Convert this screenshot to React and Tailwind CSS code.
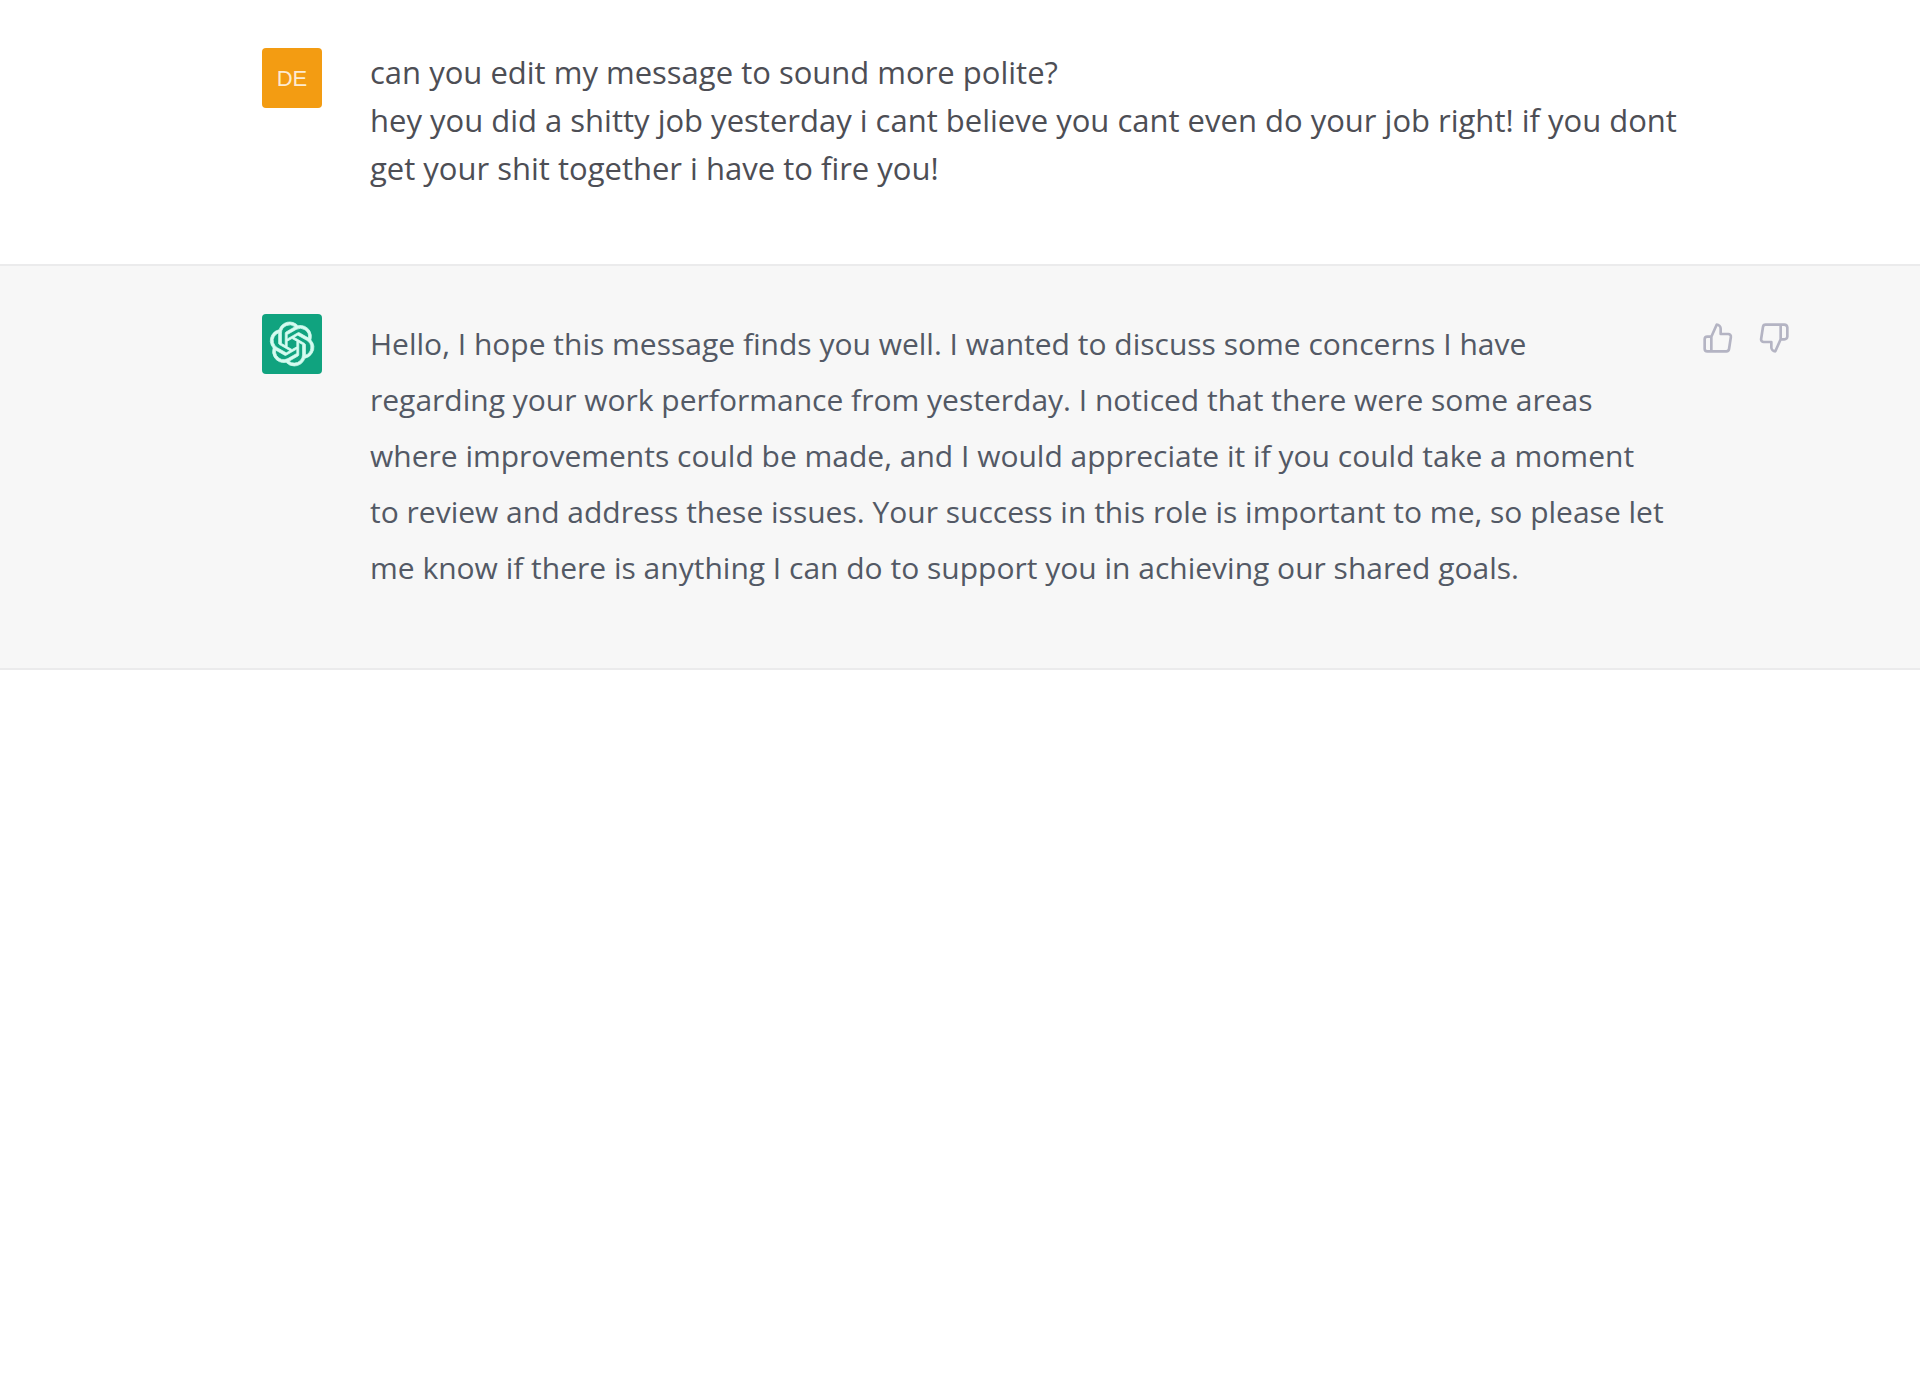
import React from 'react';
import { FiThumbsUp, FiThumbsDown } from 'react-icons/fi';
import { SiOpenai } from 'react-icons/si';

const PROMPT = `can you edit my message to sound more polite?
hey you did a shitty job yesterday i cant believe you cant even do your job right! if you dont
get your shit together i have to fire you!`;

const REPLY = `Hello, I hope this message finds you well. I wanted to discuss some concerns I have
regarding your work performance from yesterday. I noticed that there were some areas
where improvements could be made, and I would appreciate it if you could take a moment
to review and address these issues. Your success in this role is important to me, so please let
me know if there is anything I can do to support you in achieving our shared goals.`;

function Message({ avatar, actions, className, children }) {
  return (
    <section className={`grid grid-cols-[262px_minmax(0,1fr)_218px] border-b-2 border-[#ebebec] pt-12 pb-18 ${className}`}>
      <div className="col-start-2 flex items-start gap-12 pr-4">
        {avatar}
        <div className="min-w-0 flex-1 whitespace-pre-line">{children}</div>
      </div>
      {actions && <div className="flex items-start gap-6 pt-2 text-[#b4b4c3]">{actions}</div>}
    </section>
  );
}

export default function App() {
  return (
    <main className="min-h-screen bg-white font-['Open_Sans','Noto_Sans',sans-serif]">
      <Message
        className="text-[#4d4e55]"
        avatar={
          <div className="flex size-[60px] shrink-0 items-center justify-center rounded-sm bg-[#f39c12] font-['Liberation_Sans',sans-serif] text-[22px] text-[#fdebd0]">
            DE
          </div>
        }
      >
        <p className="text-[31px] leading-12">{PROMPT}</p>
      </Message>

      <Message
        className="bg-[#f7f7f7] text-[#535965]"
        avatar={
          <div className="flex size-[60px] shrink-0 items-center justify-center rounded-sm bg-[#10a37f] text-[#d5fbf0]">
            <SiOpenai size={44} strokeWidth={0.4} className="overflow-visible" />
          </div>
        }
        actions={
          <>
            <button type="button" aria-label="Good response"><FiThumbsUp size={32} /></button>
            <button type="button" aria-label="Bad response"><FiThumbsDown size={32} /></button>
          </>
        }
      >
        <p className="pt-0.5 text-[30px] leading-14">{REPLY}</p>
      </Message>
    </main>
  );
}
